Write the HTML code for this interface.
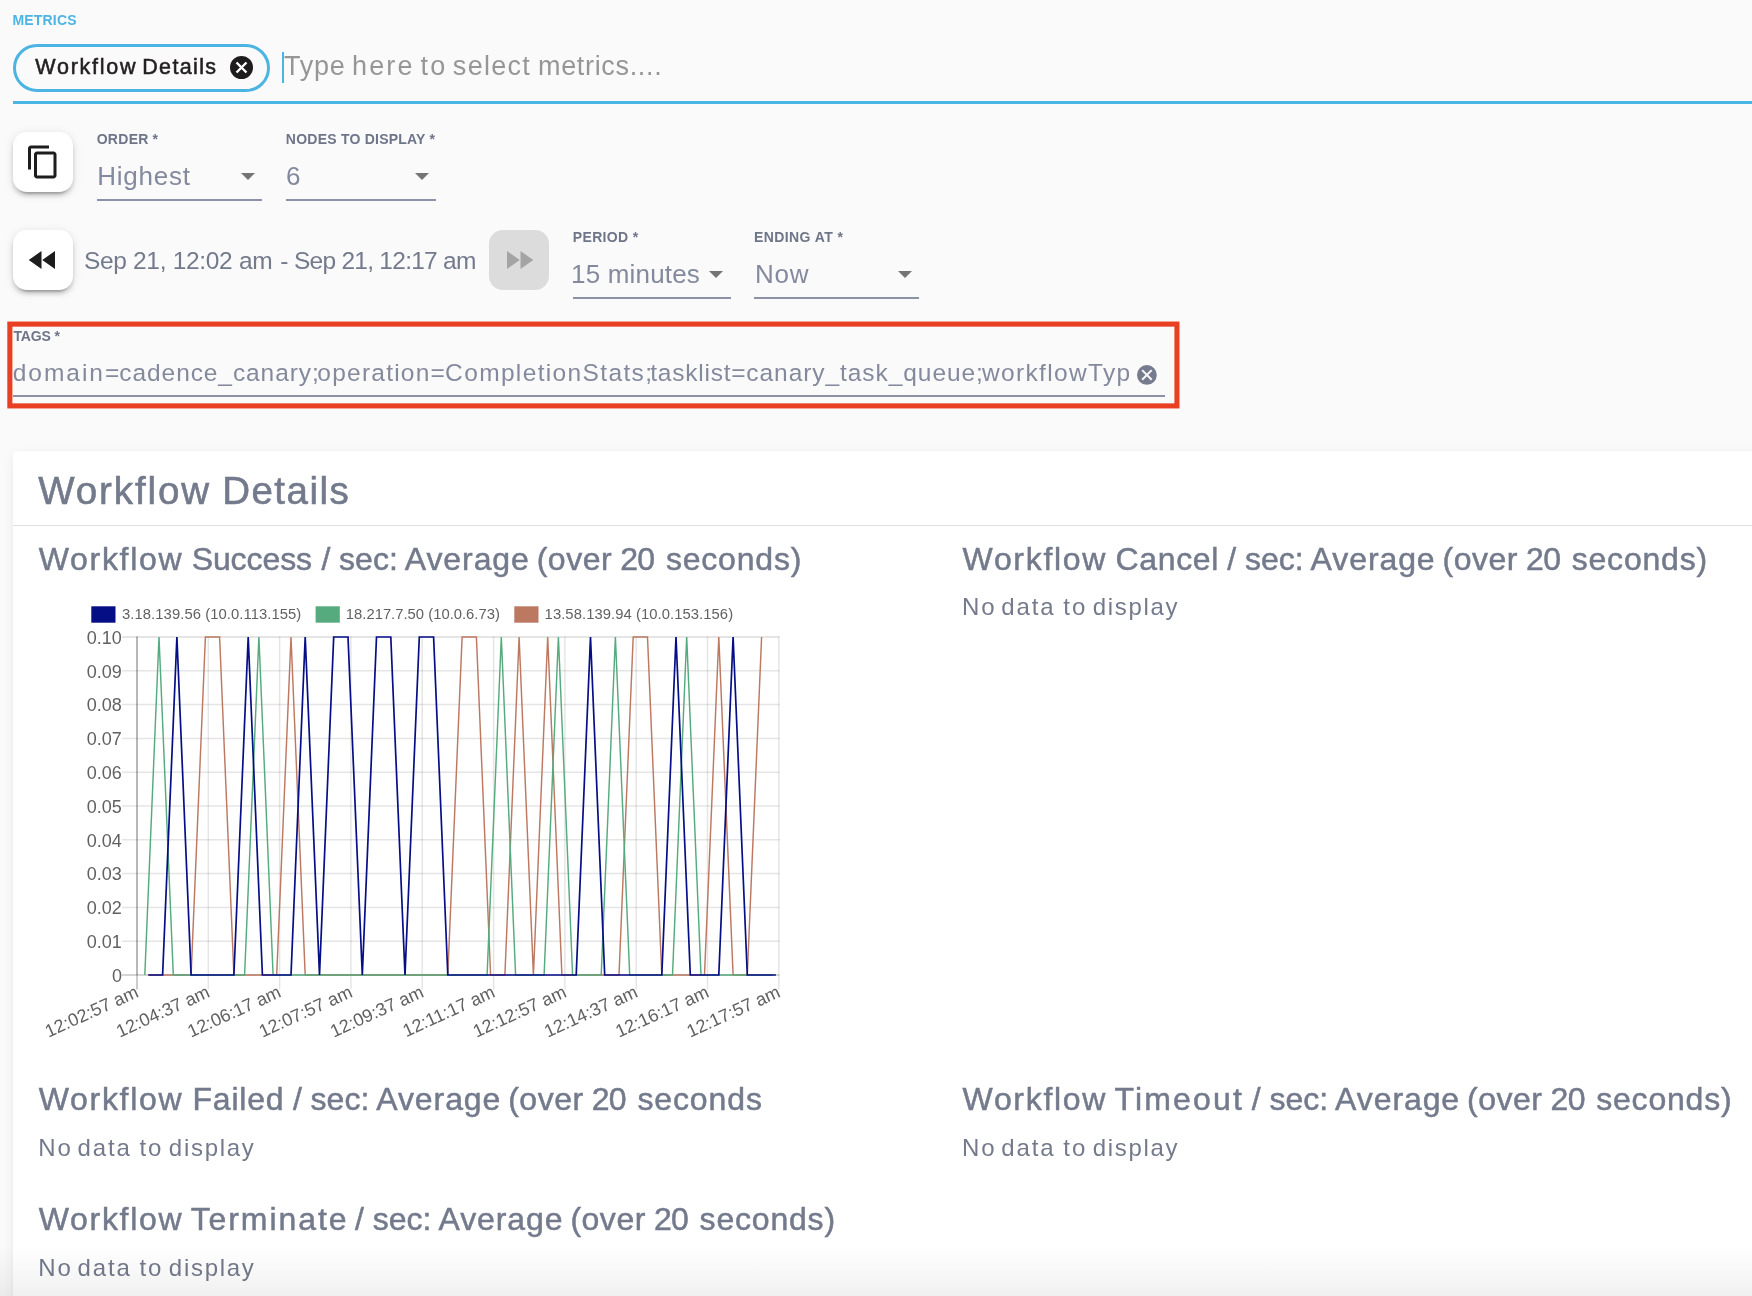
<!DOCTYPE html><html><head><meta charset="utf-8"><title>Workflow Details</title><style>
html,body{margin:0;padding:0}
body{width:1752px;height:1296px;overflow:hidden;background:#fafafa;position:relative;font-family:"Liberation Sans",sans-serif}
#wrap{position:absolute;left:0;top:0;width:1752px;height:1296px;will-change:transform}
.ln{position:absolute;left:0;top:0;width:0;height:0;white-space:pre}
.t{position:absolute;top:0;white-space:pre;display:block}
.abs{position:absolute}
.btn{position:absolute;width:60px;height:60px;border-radius:14px;background:#fff;box-shadow:0 6px 2px -4px rgba(0,0,0,.2),0 4px 4px 0 rgba(0,0,0,.14),0 2px 10px 0 rgba(0,0,0,.12)}
.btn.dis{background:#dcdcdc;box-shadow:none}
.ul{position:absolute;height:2px;background:#8c92a5}
.arr{position:absolute;width:0;height:0;border-left:7.4px solid transparent;border-right:7.4px solid transparent;border-top:7.2px solid #757575}
.card{position:absolute;left:13px;top:451px;width:1760px;height:900px;background:#fff;border-radius:4px;box-shadow:0 4px 12px rgba(0,0,0,0.07),0 0 3px rgba(0,0,0,0.035)}
svg text{white-space:pre}
</style></head><body><div id="wrap">
<div class="abs" style="left:13px;top:44px;width:257px;height:48px;box-sizing:border-box;border:3px solid #4bb4e2;border-radius:24px;background:#fafafa"></div>
<svg class="abs" style="left:229.5px;top:55.5px" width="23" height="23" viewBox="0 0 24 24"><circle cx="12" cy="12" r="12" fill="#1f1c1d"/><path d="M6.8 6.8L17.2 17.2M17.2 6.8L6.8 17.2" stroke="#fff" stroke-width="2.5" stroke-linecap="butt"/></svg>
<div class="abs" style="left:282px;top:52px;width:2px;height:31px;background:#4bb4e2"></div>
<div class="abs" style="left:13px;top:101px;width:1739px;height:3px;background:#48b5e4"></div>
<div class="btn" style="left:13px;top:132px"></div>
<svg class="abs" style="left:25.3px;top:143.8px" width="36" height="36" viewBox="0 0 24 24"><path fill="#1d1d1d" d="M16 1H4c-1.1 0-2 .9-2 2v14h2V3h12V1zm3 4H8c-1.1 0-2 .9-2 2v14c0 1.1.9 2 2 2h11c1.1 0 2-.9 2-2V7c0-1.1-.9-2-2-2zm0 16H8V7h11v14z"/></svg>
<div class="btn" style="left:13px;top:230px"></div>
<svg class="abs" style="left:25px;top:241.6px" width="36" height="36" viewBox="0 0 24 24"><path fill="#1d1d1d" d="M11 18V6l-8.5 6 8.5 6zm.5-6l8.5 6V6l-8.5 6z"/></svg>
<div class="btn dis" style="left:489px;top:230px"></div>
<svg class="abs" style="left:500.5px;top:241.8px" width="36" height="36" viewBox="0 0 24 24"><path fill="#a4a4a4" d="M4 18l8.5-6L4 6v12zm9-12v12l8.5-6L13 6z"/></svg>
<div class="ul" style="left:97px;top:199px;width:164.9px"></div>
<div class="ul" style="left:286px;top:199px;width:150.0px"></div>
<div class="ul" style="left:573px;top:297px;width:157.9px"></div>
<div class="ul" style="left:754px;top:297px;width:165.0px"></div>
<div class="arr" style="left:241.1px;top:173px"></div>
<div class="arr" style="left:415.1px;top:173px"></div>
<div class="arr" style="left:709.2px;top:271px"></div>
<div class="arr" style="left:898.1px;top:271px"></div>
<svg class="abs" style="left:0;top:310px" width="1200" height="110" viewBox="0 310 1200 110"><rect x="9.85" y="324.1" width="1167.1" height="81.8" fill="none" stroke="#e94023" stroke-width="5.1"/></svg>
<div class="ul" style="left:13px;top:395px;width:1152px"></div>
<svg class="abs" style="left:1137.15px;top:364.95px" width="19.8" height="19.8" viewBox="0 0 24 24"><circle cx="12" cy="12" r="12" fill="#767c8e"/><path d="M6.2 6.2L17.8 17.8M17.8 6.2L6.2 17.8" stroke="#fafafa" stroke-width="2.4"/></svg>
<div class="card"></div>
<div class="abs" style="left:13px;top:524.6px;width:1739px;height:1.6px;background:#dedede"></div>
<svg class="chart" width="876" height="600" viewBox="0 500 876 600" style="position:absolute;left:0;top:500px">
<line x1="122" x2="779.5" y1="975.0" y2="975.0" stroke="rgba(0,0,0,0.22)" stroke-width="1.5"/>
<line x1="122" x2="779.5" y1="941.2" y2="941.2" stroke="rgba(0,0,0,0.1)" stroke-width="1.5"/>
<line x1="122" x2="779.5" y1="907.4" y2="907.4" stroke="rgba(0,0,0,0.1)" stroke-width="1.5"/>
<line x1="122" x2="779.5" y1="873.6" y2="873.6" stroke="rgba(0,0,0,0.1)" stroke-width="1.5"/>
<line x1="122" x2="779.5" y1="839.8" y2="839.8" stroke="rgba(0,0,0,0.1)" stroke-width="1.5"/>
<line x1="122" x2="779.5" y1="806.0" y2="806.0" stroke="rgba(0,0,0,0.1)" stroke-width="1.5"/>
<line x1="122" x2="779.5" y1="772.2" y2="772.2" stroke="rgba(0,0,0,0.1)" stroke-width="1.5"/>
<line x1="122" x2="779.5" y1="738.4" y2="738.4" stroke="rgba(0,0,0,0.1)" stroke-width="1.5"/>
<line x1="122" x2="779.5" y1="704.6" y2="704.6" stroke="rgba(0,0,0,0.1)" stroke-width="1.5"/>
<line x1="122" x2="779.5" y1="670.8" y2="670.8" stroke="rgba(0,0,0,0.1)" stroke-width="1.5"/>
<line x1="122" x2="779.5" y1="637.0" y2="637.0" stroke="rgba(0,0,0,0.1)" stroke-width="2"/>
<line x1="137.0" x2="137.0" y1="636.4" y2="975" stroke="rgba(0,0,0,0.28)" stroke-width="2"/>
<line x1="137.0" x2="137.0" y1="975" y2="989.5" stroke="rgba(0,0,0,0.2)" stroke-width="2"/>
<line x1="208.3" x2="208.3" y1="636.4" y2="989.5" stroke="rgba(0,0,0,0.1)" stroke-width="1.5"/>
<line x1="279.6" x2="279.6" y1="636.4" y2="989.5" stroke="rgba(0,0,0,0.1)" stroke-width="1.5"/>
<line x1="350.9" x2="350.9" y1="636.4" y2="989.5" stroke="rgba(0,0,0,0.1)" stroke-width="1.5"/>
<line x1="422.2" x2="422.2" y1="636.4" y2="989.5" stroke="rgba(0,0,0,0.1)" stroke-width="1.5"/>
<line x1="493.6" x2="493.6" y1="636.4" y2="989.5" stroke="rgba(0,0,0,0.1)" stroke-width="1.5"/>
<line x1="564.9" x2="564.9" y1="636.4" y2="989.5" stroke="rgba(0,0,0,0.1)" stroke-width="1.5"/>
<line x1="636.2" x2="636.2" y1="636.4" y2="989.5" stroke="rgba(0,0,0,0.1)" stroke-width="1.5"/>
<line x1="707.5" x2="707.5" y1="636.4" y2="989.5" stroke="rgba(0,0,0,0.1)" stroke-width="1.5"/>
<line x1="778.8" x2="778.8" y1="636.4" y2="989.5" stroke="rgba(0,0,0,0.1)" stroke-width="1.5"/>
<clipPath id="cp"><rect x="130" y="636" width="660" height="341"/></clipPath><g clip-path="url(#cp)">
<polyline points="148.3,975.0 162.6,975.0 176.9,975.0 191.1,975.0 205.4,637.0 219.6,637.0 233.9,975.0 248.2,975.0 262.4,975.0 276.7,975.0 291.0,637.0 305.2,975.0 319.5,975.0 333.7,975.0 348.0,975.0 362.3,975.0 376.5,975.0 390.8,975.0 405.0,975.0 419.3,975.0 433.6,975.0 447.8,975.0 462.1,637.0 476.4,637.0 490.6,975.0 504.9,975.0 519.1,637.0 533.4,975.0 547.7,637.0 561.9,975.0 576.2,975.0 590.5,975.0 604.7,975.0 619.0,975.0 633.2,637.0 647.5,637.0 661.8,975.0 676.0,975.0 690.3,975.0 704.5,975.0 718.8,637.0 733.1,975.0 747.3,975.0 761.6,637.0" fill="none" stroke="#bd7862" stroke-width="1.45" stroke-linejoin="miter"/>
<polyline points="144.8,975.0 159.0,637.0 173.3,975.0 187.6,975.0 201.8,975.0 216.1,975.0 230.4,975.0 244.6,975.0 258.9,637.0 273.1,975.0 287.4,975.0 301.7,975.0 315.9,975.0 330.2,975.0 344.4,975.0 358.7,975.0 373.0,975.0 387.2,975.0 401.5,975.0 415.8,975.0 430.0,975.0 444.3,975.0 458.5,975.0 472.8,975.0 487.1,975.0 501.3,637.0 515.6,975.0 529.9,975.0 544.1,975.0 558.4,637.0 572.6,975.0 586.9,975.0 601.2,975.0 615.4,637.0 629.7,975.0 644.0,975.0 658.2,975.0 672.5,975.0 686.7,637.0 701.0,975.0 715.3,975.0 729.5,975.0 743.8,975.0 758.0,975.0 772.3,975.0" fill="none" stroke="#55ab7d" stroke-width="1.45" stroke-linejoin="miter"/>
<polyline points="148.3,975.0 162.6,975.0 176.9,637.0 191.1,975.0 205.4,975.0 219.6,975.0 233.9,975.0 248.2,637.0 262.4,975.0 276.7,975.0 291.0,975.0 305.2,637.0 319.5,975.0 333.7,637.0 348.0,637.0 362.3,975.0 376.5,637.0 390.8,637.0 405.0,975.0 419.3,637.0 433.6,637.0 447.8,975.0 462.1,975.0 476.4,975.0 490.6,975.0 504.9,975.0 519.1,975.0 533.4,975.0 547.7,975.0 561.9,975.0 576.2,975.0 590.5,637.0 604.7,975.0 619.0,975.0 633.2,975.0 647.5,975.0 661.8,975.0 676.0,637.0 690.3,975.0 704.5,975.0 718.8,975.0 733.1,637.0 747.3,975.0 761.6,975.0 775.9,975.0" fill="none" stroke="#060e86" stroke-width="1.7" stroke-linejoin="miter"/>
</g>
<rect x="91.3" y="606.3" width="24.2" height="16.4" fill="#060e86"/>
<text x="122.0" y="619.2" font-size="14.8" textLength="179.3" lengthAdjust="spacing" fill="#616161" font-family="'Liberation Sans', sans-serif">3.18.139.56 (10.0.113.155)</text>
<rect x="315.6" y="606.3" width="24.2" height="16.4" fill="#55ab7d"/>
<text x="345.8" y="619.2" font-size="14.8" textLength="154.1" lengthAdjust="spacing" fill="#616161" font-family="'Liberation Sans', sans-serif">18.217.7.50 (10.0.6.73)</text>
<rect x="514.3" y="606.3" width="24.2" height="16.4" fill="#bd7862"/>
<text x="544.6" y="619.2" font-size="14.8" textLength="188.5" lengthAdjust="spacing" fill="#616161" font-family="'Liberation Sans', sans-serif">13.58.139.94 (10.0.153.156)</text>
<text x="121.9" y="981.8" text-anchor="end" font-size="18" fill="#616161" font-family="'Liberation Sans', sans-serif">0</text>
<text x="121.9" y="948.0" text-anchor="end" font-size="18" fill="#616161" font-family="'Liberation Sans', sans-serif">0.01</text>
<text x="121.9" y="914.2" text-anchor="end" font-size="18" fill="#616161" font-family="'Liberation Sans', sans-serif">0.02</text>
<text x="121.9" y="880.4" text-anchor="end" font-size="18" fill="#616161" font-family="'Liberation Sans', sans-serif">0.03</text>
<text x="121.9" y="846.6" text-anchor="end" font-size="18" fill="#616161" font-family="'Liberation Sans', sans-serif">0.04</text>
<text x="121.9" y="812.8" text-anchor="end" font-size="18" fill="#616161" font-family="'Liberation Sans', sans-serif">0.05</text>
<text x="121.9" y="779.0" text-anchor="end" font-size="18" fill="#616161" font-family="'Liberation Sans', sans-serif">0.06</text>
<text x="121.9" y="745.2" text-anchor="end" font-size="18" fill="#616161" font-family="'Liberation Sans', sans-serif">0.07</text>
<text x="121.9" y="711.4" text-anchor="end" font-size="18" fill="#616161" font-family="'Liberation Sans', sans-serif">0.08</text>
<text x="121.9" y="677.6" text-anchor="end" font-size="18" fill="#616161" font-family="'Liberation Sans', sans-serif">0.09</text>
<text x="121.9" y="643.8" text-anchor="end" font-size="18" fill="#616161" font-family="'Liberation Sans', sans-serif">0.10</text>
<text transform="translate(137.0,990.5) rotate(-24.4)" x="0" y="6.4" text-anchor="end" font-size="18" fill="#616161" font-family="'Liberation Sans', sans-serif">12:02:57 am</text>
<text transform="translate(208.3,990.5) rotate(-24.4)" x="0" y="6.4" text-anchor="end" font-size="18" fill="#616161" font-family="'Liberation Sans', sans-serif">12:04:37 am</text>
<text transform="translate(279.6,990.5) rotate(-24.4)" x="0" y="6.4" text-anchor="end" font-size="18" fill="#616161" font-family="'Liberation Sans', sans-serif">12:06:17 am</text>
<text transform="translate(350.9,990.5) rotate(-24.4)" x="0" y="6.4" text-anchor="end" font-size="18" fill="#616161" font-family="'Liberation Sans', sans-serif">12:07:57 am</text>
<text transform="translate(422.2,990.5) rotate(-24.4)" x="0" y="6.4" text-anchor="end" font-size="18" fill="#616161" font-family="'Liberation Sans', sans-serif">12:09:37 am</text>
<text transform="translate(493.6,990.5) rotate(-24.4)" x="0" y="6.4" text-anchor="end" font-size="18" fill="#616161" font-family="'Liberation Sans', sans-serif">12:11:17 am</text>
<text transform="translate(564.9,990.5) rotate(-24.4)" x="0" y="6.4" text-anchor="end" font-size="18" fill="#616161" font-family="'Liberation Sans', sans-serif">12:12:57 am</text>
<text transform="translate(636.2,990.5) rotate(-24.4)" x="0" y="6.4" text-anchor="end" font-size="18" fill="#616161" font-family="'Liberation Sans', sans-serif">12:14:37 am</text>
<text transform="translate(707.5,990.5) rotate(-24.4)" x="0" y="6.4" text-anchor="end" font-size="18" fill="#616161" font-family="'Liberation Sans', sans-serif">12:16:17 am</text>
<text transform="translate(778.8,990.5) rotate(-24.4)" x="0" y="6.4" text-anchor="end" font-size="18" fill="#616161" font-family="'Liberation Sans', sans-serif">12:17:57 am</text>
</svg>
<div class="ln" id="t_metrics" style="top:13.37px;font:bold 14px/14px 'Liberation Sans', sans-serif;color:#4db5e3;"><span class="t" style="left:12.46px;letter-spacing:0.186px">METRICS</span></div>
<div class="ln" id="t_chip" style="top:57.33px;font:normal 21.5px/21.5px 'Liberation Sans', sans-serif;color:#231f20;-webkit-text-stroke:0.55px #231f20;"><span class="t" style="left:35.30px;letter-spacing:1.743px">Workflow</span> <span class="t" style="left:142.21px;letter-spacing:1.367px">Details</span></div>
<div class="ln" id="t_ph" style="top:52.69px;font:normal 27px/27px 'Liberation Sans', sans-serif;color:#969696;"><span class="t" style="left:283.97px;letter-spacing:0.772px">Type</span> <span class="t" style="left:351.99px;letter-spacing:2.154px">here</span> <span class="t" style="left:420.44px;letter-spacing:2.295px">to</span> <span class="t" style="left:452.86px;letter-spacing:1.285px">select</span> <span class="t" style="left:537.99px;letter-spacing:0.668px">metrics....</span></div>
<div class="ln" id="t_order" style="top:132.17px;font:bold 14px/14px 'Liberation Sans', sans-serif;color:#6e7588;"><span class="t" style="left:96.63px;letter-spacing:0.320px">ORDER</span> <span class="t" style="left:152.50px;letter-spacing:0.000px">*</span></div>
<div class="ln" id="t_highest" style="top:163.03px;font:normal 26px/26px 'Liberation Sans', sans-serif;color:#848a9d;"><span class="t" style="left:97.29px;letter-spacing:0.744px">Highest</span></div>
<div class="ln" id="t_nodes" style="top:132.17px;font:bold 14px/14px 'Liberation Sans', sans-serif;color:#6e7588;"><span class="t" style="left:285.86px;letter-spacing:0.230px">NODES TO DISPLAY *</span></div>
<div class="ln" id="t_six" style="top:163.03px;font:normal 26px/26px 'Liberation Sans', sans-serif;color:#848a9d;"><span class="t" style="left:286.10px;letter-spacing:0.000px">6</span></div>
<div class="ln" id="t_date" style="top:248.50px;font:normal 24.5px/24.5px 'Liberation Sans', sans-serif;color:#737a8c;"><span class="t" style="left:83.91px;letter-spacing:-0.313px">Sep 21, 12:02 am</span> <span class="t" style="left:280.28px;letter-spacing:0.000px">-</span> <span class="t" style="left:293.98px;letter-spacing:-0.735px">Sep 21, 12:17 am</span></div>
<div class="ln" id="t_period" style="top:230.17px;font:bold 14px/14px 'Liberation Sans', sans-serif;color:#6e7588;"><span class="t" style="left:572.86px;letter-spacing:0.325px">PERIOD *</span></div>
<div class="ln" id="t_15" style="top:261.03px;font:normal 26px/26px 'Liberation Sans', sans-serif;color:#848a9d;"><span class="t" style="left:571.09px;letter-spacing:0.179px">15 minutes</span></div>
<div class="ln" id="t_ending" style="top:230.17px;font:bold 14px/14px 'Liberation Sans', sans-serif;color:#6e7588;"><span class="t" style="left:753.96px;letter-spacing:0.411px">ENDING AT *</span></div>
<div class="ln" id="t_now" style="top:261.03px;font:normal 26px/26px 'Liberation Sans', sans-serif;color:#848a9d;"><span class="t" style="left:754.88px;letter-spacing:0.765px">Now</span></div>
<div class="ln" id="t_tags" style="top:328.97px;font:bold 14px/14px 'Liberation Sans', sans-serif;color:#6e7588;"><span class="t" style="left:13.47px;letter-spacing:-0.162px">TAGS *</span></div>
<div class="ln" id="t_tagv" style="top:360.50px;font:normal 24.5px/24.5px 'Liberation Sans', sans-serif;color:#848a9d;"><span class="t" style="left:12.76px;letter-spacing:1.966px">domain=</span><span class="t" style="left:119.36px;letter-spacing:0.910px">cadence_canary;</span><span class="t" style="left:317.36px;letter-spacing:1.222px">operation=</span><span class="t" style="left:445.12px;letter-spacing:1.352px">CompletionStats;</span><span class="t" style="left:650.25px;letter-spacing:0.763px">tasklist=</span><span class="t" style="left:746.36px;letter-spacing:0.932px">canary_task_queue;</span><span class="t" style="left:982.04px;letter-spacing:1.339px">workflowTyp</span></div>
<div class="ln" id="t_title" style="top:472.47px;font:normal 38.5px/38.5px 'Liberation Sans', sans-serif;color:#737a8c;-webkit-text-stroke:0.6px #737a8c;"><span class="t" style="left:38.29px;letter-spacing:1.892px">Workflow</span> <span class="t" style="left:222.14px;letter-spacing:1.507px">Details</span></div>
<div class="ln" id="t_h1" style="top:542.56px;font:normal 32px/32px 'Liberation Sans', sans-serif;color:#737a8c;-webkit-text-stroke:0.5px #737a8c;"><span class="t" style="left:38.78px;letter-spacing:1.684px">Workflow</span> <span class="t" style="left:191.63px;letter-spacing:-0.076px">Success</span> <span class="t" style="left:321.40px;letter-spacing:0.000px">/</span> <span class="t" style="left:339.10px;letter-spacing:0.003px">sec:</span> <span class="t" style="left:404.81px;letter-spacing:0.903px">Average</span> <span class="t" style="left:536.68px;letter-spacing:0.519px">(over</span> <span class="t" style="left:620.21px;letter-spacing:-0.628px">20</span> <span class="t" style="left:665.90px;letter-spacing:0.802px">seconds)</span></div>
<div class="ln" id="t_h2" style="top:542.56px;font:normal 32px/32px 'Liberation Sans', sans-serif;color:#737a8c;-webkit-text-stroke:0.5px #737a8c;"><span class="t" style="left:962.58px;letter-spacing:1.684px">Workflow</span> <span class="t" style="left:1115.61px;letter-spacing:0.621px">Cancel</span> <span class="t" style="left:1227.20px;letter-spacing:0.000px">/</span> <span class="t" style="left:1244.90px;letter-spacing:0.003px">sec:</span> <span class="t" style="left:1310.61px;letter-spacing:0.903px">Average</span> <span class="t" style="left:1442.48px;letter-spacing:0.519px">(over</span> <span class="t" style="left:1526.01px;letter-spacing:-0.628px">20</span> <span class="t" style="left:1571.70px;letter-spacing:0.802px">seconds)</span></div>
<div class="ln" id="t_n2" style="top:594.72px;font:normal 24px/24px 'Liberation Sans', sans-serif;color:#737a8c;"><span class="t" style="left:961.99px;letter-spacing:2.040px">No</span> <span class="t" style="left:1001.37px;letter-spacing:1.833px">data</span> <span class="t" style="left:1063.18px;letter-spacing:2.040px">to</span> <span class="t" style="left:1092.67px;letter-spacing:1.708px">display</span></div>
<div class="ln" id="t_h3" style="top:1083.16px;font:normal 32px/32px 'Liberation Sans', sans-serif;color:#737a8c;-webkit-text-stroke:0.5px #737a8c;"><span class="t" style="left:38.78px;letter-spacing:1.684px">Workflow</span> <span class="t" style="left:192.43px;letter-spacing:0.808px">Failed</span> <span class="t" style="left:292.90px;letter-spacing:0.000px">/</span> <span class="t" style="left:310.60px;letter-spacing:0.003px">sec:</span> <span class="t" style="left:376.31px;letter-spacing:0.903px">Average</span> <span class="t" style="left:508.18px;letter-spacing:0.519px">(over</span> <span class="t" style="left:591.71px;letter-spacing:-0.628px">20</span> <span class="t" style="left:637.40px;letter-spacing:0.894px">seconds</span></div>
<div class="ln" id="t_n3" style="top:1135.92px;font:normal 24px/24px 'Liberation Sans', sans-serif;color:#737a8c;"><span class="t" style="left:38.19px;letter-spacing:2.040px">No</span> <span class="t" style="left:77.57px;letter-spacing:1.833px">data</span> <span class="t" style="left:139.38px;letter-spacing:2.040px">to</span> <span class="t" style="left:168.87px;letter-spacing:1.708px">display</span></div>
<div class="ln" id="t_h4" style="top:1083.16px;font:normal 32px/32px 'Liberation Sans', sans-serif;color:#737a8c;-webkit-text-stroke:0.5px #737a8c;"><span class="t" style="left:962.58px;letter-spacing:1.684px">Workflow</span> <span class="t" style="left:1114.53px;letter-spacing:2.141px">Timeout</span> <span class="t" style="left:1251.70px;letter-spacing:0.000px">/</span> <span class="t" style="left:1269.40px;letter-spacing:0.003px">sec:</span> <span class="t" style="left:1335.11px;letter-spacing:0.903px">Average</span> <span class="t" style="left:1466.98px;letter-spacing:0.519px">(over</span> <span class="t" style="left:1550.51px;letter-spacing:-0.628px">20</span> <span class="t" style="left:1596.20px;letter-spacing:0.802px">seconds)</span></div>
<div class="ln" id="t_n4" style="top:1135.92px;font:normal 24px/24px 'Liberation Sans', sans-serif;color:#737a8c;"><span class="t" style="left:961.99px;letter-spacing:2.040px">No</span> <span class="t" style="left:1001.37px;letter-spacing:1.833px">data</span> <span class="t" style="left:1063.18px;letter-spacing:2.040px">to</span> <span class="t" style="left:1092.67px;letter-spacing:1.708px">display</span></div>
<div class="ln" id="t_h5" style="top:1203.06px;font:normal 32px/32px 'Liberation Sans', sans-serif;color:#737a8c;-webkit-text-stroke:0.5px #737a8c;"><span class="t" style="left:38.78px;letter-spacing:1.684px">Workflow</span> <span class="t" style="left:190.63px;letter-spacing:1.924px">Terminate</span> <span class="t" style="left:355.10px;letter-spacing:0.000px">/</span> <span class="t" style="left:372.80px;letter-spacing:0.003px">sec:</span> <span class="t" style="left:438.51px;letter-spacing:0.903px">Average</span> <span class="t" style="left:570.38px;letter-spacing:0.519px">(over</span> <span class="t" style="left:653.91px;letter-spacing:-0.628px">20</span> <span class="t" style="left:699.60px;letter-spacing:0.802px">seconds)</span></div>
<div class="ln" id="t_n5" style="top:1255.92px;font:normal 24px/24px 'Liberation Sans', sans-serif;color:#737a8c;"><span class="t" style="left:38.19px;letter-spacing:2.040px">No</span> <span class="t" style="left:77.57px;letter-spacing:1.833px">data</span> <span class="t" style="left:139.38px;letter-spacing:2.040px">to</span> <span class="t" style="left:168.87px;letter-spacing:1.708px">display</span></div>
<div class="abs" style="left:0;top:1246px;width:1752px;height:50px;background:linear-gradient(to bottom,rgba(0,0,0,0),rgba(0,0,0,0.058))"></div>
</div></body></html>
